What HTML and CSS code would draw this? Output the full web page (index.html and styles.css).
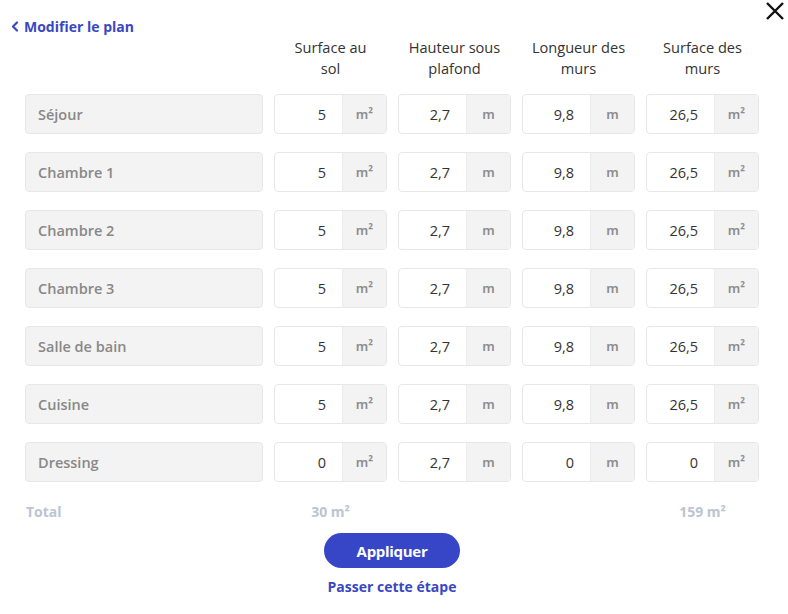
FILE: index.html
```html
<!DOCTYPE html>
<html lang="fr">
<head>
<meta charset="utf-8">
<title>Modifier le plan</title>
<link rel="stylesheet" href="styles.css">
</head>
<body>
<div class="modal">
  <a class="back" href="#"><svg class="chev" width="8" height="11" viewBox="0 0 8 11"><path d="M6 1.5 L2 5.5 L6 9.5" fill="none" stroke="currentColor" stroke-width="2.2" stroke-linecap="round" stroke-linejoin="round"/></svg>Modifier le plan</a>
  <button class="close" aria-label="Fermer"><svg width="20" height="18" viewBox="0 0 20 18"><path d="M2 1 L18 17 M18 1 L2 17" stroke="#111" stroke-width="2.4" fill="none"/></svg></button>

  <div class="grid head">
    <div></div>
    <div class="th">Surface au<br>sol</div>
    <div class="th">Hauteur sous<br>plafond</div>
    <div class="th">Longueur des<br>murs</div>
    <div class="th">Surface des<br>murs</div>
  </div>

  <div class="grid rows">
    <div class="name">Séjour</div>
    <div class="field"><span class="val">5</span><span class="unit">m²</span></div>
    <div class="field"><span class="val">2,7</span><span class="unit">m</span></div>
    <div class="field"><span class="val">9,8</span><span class="unit">m</span></div>
    <div class="field"><span class="val">26,5</span><span class="unit">m²</span></div>

    <div class="name">Chambre 1</div>
    <div class="field"><span class="val">5</span><span class="unit">m²</span></div>
    <div class="field"><span class="val">2,7</span><span class="unit">m</span></div>
    <div class="field"><span class="val">9,8</span><span class="unit">m</span></div>
    <div class="field"><span class="val">26,5</span><span class="unit">m²</span></div>

    <div class="name">Chambre 2</div>
    <div class="field"><span class="val">5</span><span class="unit">m²</span></div>
    <div class="field"><span class="val">2,7</span><span class="unit">m</span></div>
    <div class="field"><span class="val">9,8</span><span class="unit">m</span></div>
    <div class="field"><span class="val">26,5</span><span class="unit">m²</span></div>

    <div class="name">Chambre 3</div>
    <div class="field"><span class="val">5</span><span class="unit">m²</span></div>
    <div class="field"><span class="val">2,7</span><span class="unit">m</span></div>
    <div class="field"><span class="val">9,8</span><span class="unit">m</span></div>
    <div class="field"><span class="val">26,5</span><span class="unit">m²</span></div>

    <div class="name">Salle de bain</div>
    <div class="field"><span class="val">5</span><span class="unit">m²</span></div>
    <div class="field"><span class="val">2,7</span><span class="unit">m</span></div>
    <div class="field"><span class="val">9,8</span><span class="unit">m</span></div>
    <div class="field"><span class="val">26,5</span><span class="unit">m²</span></div>

    <div class="name">Cuisine</div>
    <div class="field"><span class="val">5</span><span class="unit">m²</span></div>
    <div class="field"><span class="val">2,7</span><span class="unit">m</span></div>
    <div class="field"><span class="val">9,8</span><span class="unit">m</span></div>
    <div class="field"><span class="val">26,5</span><span class="unit">m²</span></div>

    <div class="name">Dressing</div>
    <div class="field"><span class="val">0</span><span class="unit">m²</span></div>
    <div class="field"><span class="val">2,7</span><span class="unit">m</span></div>
    <div class="field"><span class="val">0</span><span class="unit">m</span></div>
    <div class="field"><span class="val">0</span><span class="unit">m²</span></div>
  </div>

  <div class="grid total">
    <div class="tlabel">Total</div>
    <div class="tval">30 m²</div>
    <div></div>
    <div></div>
    <div class="tval">159 m²</div>
  </div>

  <div class="actions">
    <button class="apply">Appliquer</button>
    <a class="skip" href="#">Passer cette étape</a>
  </div>
</div>
</body>
</html>
```

FILE: styles.css
```css
* { box-sizing: border-box; }
html, body { margin: 0; padding: 0; background: #fff; }
body {
  font-family: "Open Sans", "Noto Sans", sans-serif;
  color: #333;
  width: 788px;
  height: 614px;
  overflow: hidden;
}
.modal {
  position: relative;
  padding: 15px 29px 0 25px;
}
.back {
  display: inline-flex;
  align-items: center;
  gap: 5px;
  margin-left: -14px;
  height: 20px;
  font-size: 14px;
  font-weight: 700;
  color: #3a47c2;
  text-decoration: none;
}
.chev { display: block; }
.close {
  position: absolute;
  top: 2px;
  right: 3px;
  border: 0;
  background: none;
  padding: 0;
  width: 20px;
  height: 18px;
}
.close svg { display: block; }
.grid {
  display: grid;
  grid-template-columns: 238px repeat(4, 113px);
  column-gap: 11px;
}
.th {
  text-align: center;
  font-size: 14.6px;
  line-height: 21px;
  color: #333;
}
.rows {
  margin-top: 15px;
  row-gap: 18px;
}
.name {
  height: 40px;
  background: #f3f3f3;
  border: 1px solid #e7e7e7;
  border-radius: 4px;
  display: flex;
  align-items: center;
  padding-left: 12px;
  font-size: 14.5px;
  font-weight: 600;
  color: #888;
}
.field {
  height: 40px;
  display: flex;
  border: 1px solid #e7e7e7;
  border-radius: 4px;
  overflow: hidden;
  background: #fff;
}
.val {
  width: 67px;
  display: flex;
  align-items: center;
  justify-content: flex-end;
  padding-right: 16px;
  font-size: 14.5px;
  font-weight: 500;
  color: #333;
}
.unit {
  flex: 1;
  background: #f3f3f3;
  border-left: 1px solid #ececec;
  display: flex;
  align-items: center;
  justify-content: center;
  font-family: "Noto Sans", "Open Sans", sans-serif;
  font-size: 13px;
  font-weight: 600;
  color: #8c8c8c;
}
.total {
  margin-top: 21px;
  font-size: 14px;
  font-weight: 700;
  line-height: 18px;
  color: #bcc4d0;
}
.tlabel { padding-left: 1px; }
.tval { text-align: center; }
.actions {
  display: flex;
  flex-direction: column;
  align-items: center;
  margin-top: 12px;
}
.apply {
  width: 136px;
  height: 35px;
  border: 0;
  border-radius: 18px;
  background: #3646c6;
  color: #fff;
  font-family: inherit;
  font-size: 15px;
  font-weight: 700;
  letter-spacing: -0.3px;
  padding: 0;
}
.skip {
  margin-top: 9px;
  font-size: 14px;
  font-weight: 700;
  color: #3a47c2;
  text-decoration: none;
  line-height: 20px;
}
```
